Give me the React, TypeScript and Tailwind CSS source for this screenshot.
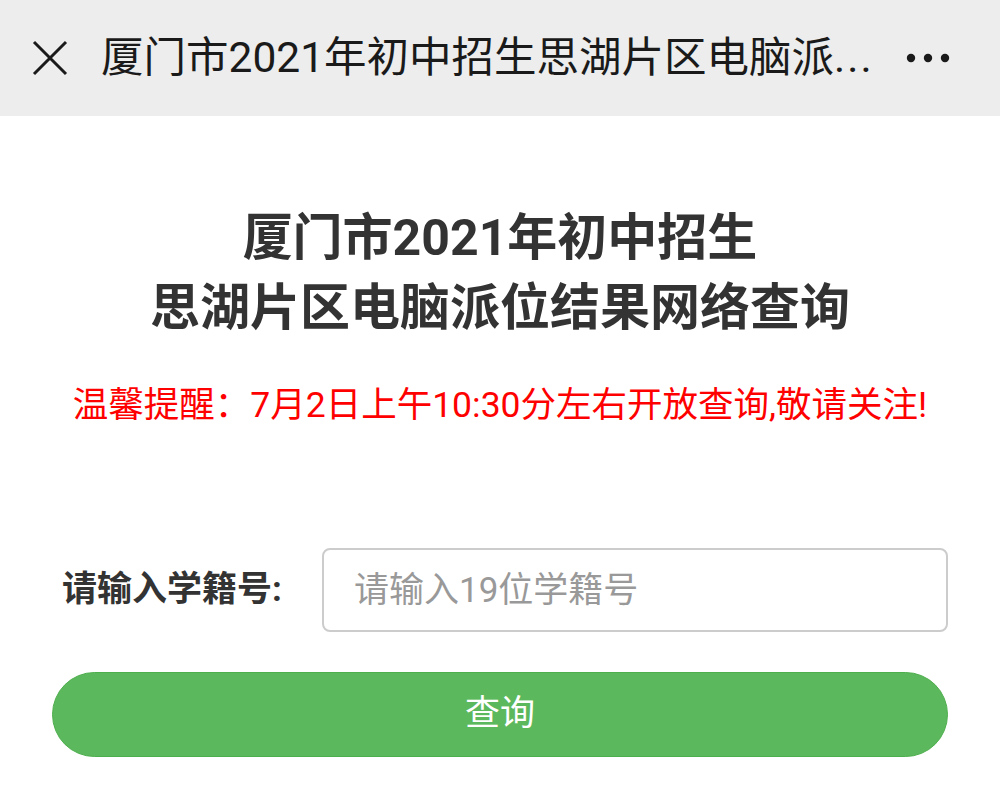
import React from "react";

const font = "font-['Roboto','Noto_Sans_CJK_SC',sans-serif]";

const CloseIcon = () => (
  <svg width="36" height="36" viewBox="0 0 36 36" className="shrink-0">
    <path d="M2 2 L34 34 M34 2 L2 34" stroke="#1a1a1a" strokeWidth="3" strokeLinecap="butt" />
  </svg>
);

const MoreIcon = () => (
  <svg width="44" height="10" viewBox="0 0 44 10" className="shrink-0">
    <circle cx="5" cy="5" r="4.2" fill="#1a1a1a" />
    <circle cx="22" cy="5" r="4.2" fill="#1a1a1a" />
    <circle cx="39" cy="5" r="4.2" fill="#1a1a1a" />
  </svg>
);

export default function App() {
  return (
    <div className={`w-[1000px] h-[802px] bg-white overflow-hidden ${font}`}>
      <header className="h-[116px] bg-[#ededed] flex items-center pl-[32px] pr-[50px]">
        <CloseIcon />
        <h1 className="ml-[33px] text-[42.5px] leading-none text-[#1a1a1a] whitespace-nowrap">
          厦门市2021年初中招生思湖片区电脑派
          <span className="tracking-[2px]">...</span>
        </h1>
        <div className="flex-1" />
        <MoreIcon />
      </header>

      <main className="flex flex-col items-center">
        <h2 className="mt-[87px] text-center text-[50px] leading-[70px] font-bold text-[#333]">
          厦门市2021年初中招生
          <br />
          思湖片区电脑派位结果网络查询
        </h2>

        <p className="mt-[37px] text-[35.5px] leading-[50px] text-[#ff0000] whitespace-nowrap">
          温馨提醒：7月2日上午10:30分左右开放查询,敬请关注!
        </p>

        <section className="w-full px-[52px] mt-[118px] flex flex-col gap-[40px]">
          <div className="flex items-center pl-[10px]">
            <label className="w-[260px] text-[35px] font-bold text-[#333] whitespace-nowrap">
              请输入学籍号:
            </label>
            <input
              className={`flex-1 h-[84px] rounded-[8px] border-2 border-[#cccccc] px-[30px] text-[35px] text-[#333] placeholder:text-[#999] outline-none ${font}`}
              placeholder="请输入19位学籍号"
            />
          </div>

          <button className="h-[85px] w-full rounded-full bg-[#5cb85c] border border-[#4cae4c] text-white text-[35px]">
            查询
          </button>
        </section>
      </main>
    </div>
  );
}
